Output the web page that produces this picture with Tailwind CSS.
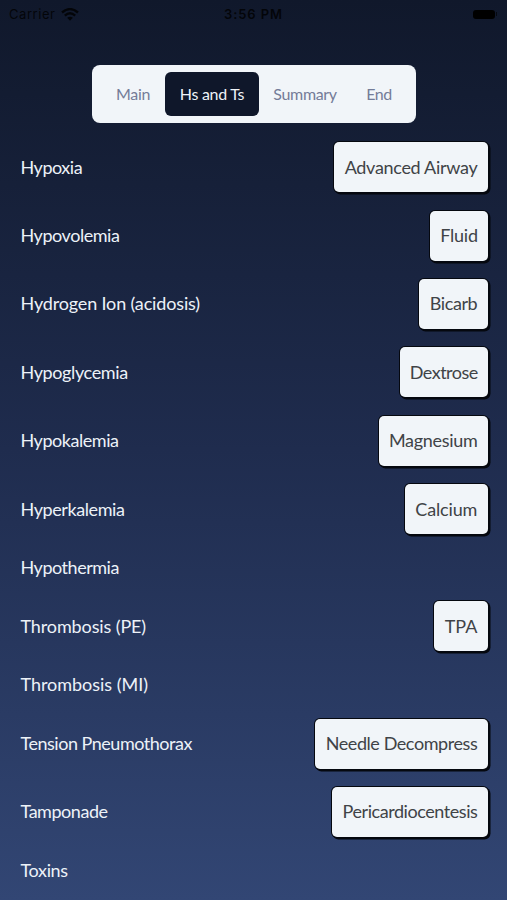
<!DOCTYPE html>
<html lang="en"><head><meta charset="utf-8"><title>Hs and Ts</title>
<script src="https://cdn.jsdelivr.net/npm/@tailwindcss/browser@4"></script></head>
<body class="w-[507px] h-[900px] overflow-hidden bg-linear-to-b from-[#10182b] via-[#1f2c4e] to-[#324674] font-[Lato,sans-serif]">
<header class="h-[65px] pt-[5px] pl-[9px] pr-[10px] flex items-start justify-between text-black/80 font-['Inter',sans-serif] text-[13px] leading-[18px]">
<div class="w-[120px] flex items-center gap-[6px]"><span class="tracking-[0.55px]">Carrier</span>
<svg class="w-[18px] h-[13px]" viewBox="0 0 18 13" fill="none" stroke="currentColor" stroke-width="2.4"><path d="M1 4.5Q9-2.3 17 4.5M3.8 7.6Q9 3.1 14.2 7.6"/><path d="M9 12.7L6.1 9.8Q9 7.5 11.9 9.8Z" fill="currentColor" stroke="none"/></svg></div>
<span class="font-semibold tracking-[0.9px] ml-[1px]">3:56 PM</span>
<div class="w-[120px] h-[18px] flex justify-end items-center"><div class="w-[22px] h-[9px] rounded-[3px] bg-black"></div><div class="w-[1px] h-[4px] ml-[1px] bg-black/60"></div></div>
</header>
<nav class="ml-[92px] w-[324px] h-[58px] rounded-[8px] bg-[#f1f5f9] flex items-center text-[16px] text-[#747c98] px-[9px]">
<div class="w-[64px] text-center tracking-[-0.35px]">Main</div>
<div class="w-[94px] h-[44px] rounded-[6px] bg-[#0f172a] text-[#eef2f7] flex items-center justify-center tracking-[-0.3px]">Hs and Ts</div>
<div class="w-[92px] text-center tracking-[-0.35px]">Summary</div>
<div class="w-[56px] text-center tracking-[-0.5px]">End</div>
</nav>
<main id="rows" class="pt-[10px] pl-[20.5px] pr-[19px] text-[18px] text-[#edf2f8]"></main>
<script>
// [label, label tracking, treatment, button width, button tracking]
const items = [["Hypoxia",-.47,"Advanced Airway",154,-.3],["Hypovolemia",-.45,"Fluid",58,-.25],["Hydrogen Ion (acidosis)",-.15,"Bicarb",69,-.4],["Hypoglycemia",-.37,"Dextrose",88.5,-.5],["Hypokalemia",-.45,"Magnesium",109.5,-.3],["Hyperkalemia",-.4,"Calcium",83.5,-.15],["Hypothermia",-.47],["Thrombosis (PE)",-.12,"TPA",54,0],["Thrombosis (MI)",-.03],["Tension Pneumothorax",-.48,"Needle Decompress",173,-.42],["Tamponade",-.45,"Pericardiocentesis",156,-.44],["Toxins",-.35]];
document.getElementById("rows").innerHTML = items.map(([n,s,b,w,t]) => `<div class="flex items-center justify-between ${b ? 'h-[68.4px]' : 'h-[48.8px]'}"><span class="whitespace-nowrap" style="letter-spacing:${s}px">${n}</span>${b ? `<button class="h-[50px] rounded-[5px] bg-[#f1f5f9] text-[#404347] whitespace-nowrap shadow-[0_0_0_1px_#05080f,1.5px_1.5px_0_1px_#05080f]" style="width:${w}px;letter-spacing:${t}px">${b}</button>` : ''}</div>`).join("");
</script>
</body></html>
